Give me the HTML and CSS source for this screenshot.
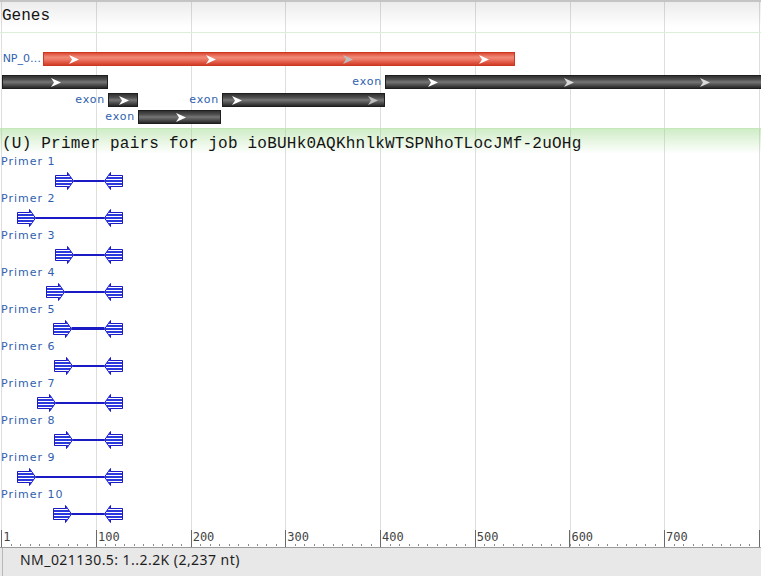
FILE: index.html
```html
<!DOCTYPE html>
<html>
<head>
<meta charset="utf-8">
<title>Sequence viewer</title>
<link rel="stylesheet" href="styles.css">
</head>
<body>
<svg class="defs" width="0" height="0" aria-hidden="true">
  <defs>
    <pattern id="stripes" patternUnits="userSpaceOnUse" width="4" height="3">
      <rect width="4" height="3" fill="#2b39dc"/>
      <rect y="1" width="4" height="1" fill="#ffffff"/>
    </pattern>
    <symbol id="chev" viewBox="0 0 10 9"><polygon points="0,0 10,4.5 0,9 3,4.5"/></symbol>
    <g id="pf"><polygon points="0.5,3.5 12.5,3.5 12.5,0.5 18.5,9 12.5,17.5 12.5,14.5 0.5,14.5" fill="url(#stripes)" stroke="#1b1bc6" stroke-width="1"/></g>
    <g id="pr"><polygon points="18.5,3.5 6.5,3.5 6.5,0.5 0.5,9 6.5,17.5 6.5,14.5 18.5,14.5" fill="url(#stripes)" stroke="#1b1bc6" stroke-width="1"/></g>
  </defs>
</svg>
<div class="viewer">
  <div class="panel">
    <div class="sec-head genes-head">Genes</div>
    <div class="genes">
      <div class="feat mrna" style="left:43px;top:19px;width:472px">
        <span class="flabel name">NP_0…</span>
        <svg class="chev" style="left:25px"><use href="#chev"/></svg>
        <svg class="chev" style="left:162px"><use href="#chev"/></svg>
        <svg class="chev dim" style="left:299px"><use href="#chev"/></svg>
        <svg class="chev" style="left:435px"><use href="#chev"/></svg>
      </div>
      <div class="feat" style="left:2px;top:42px;width:106px">
        <svg class="chev" style="left:48px"><use href="#chev"/></svg>
      </div>
      <div class="feat" style="left:385px;top:42px;width:400px">
        <span class="flabel">exon</span>
        <svg class="chev" style="left:42px"><use href="#chev"/></svg>
        <svg class="chev light" style="left:178px"><use href="#chev"/></svg>
        <svg class="chev light" style="left:314px"><use href="#chev"/></svg>
      </div>
      <div class="feat" style="left:108px;top:60px;width:30px">
        <span class="flabel">exon</span>
        <svg class="chev" style="left:10px"><use href="#chev"/></svg>
      </div>
      <div class="feat" style="left:222px;top:60px;width:163px">
        <span class="flabel">exon</span>
        <svg class="chev" style="left:9px"><use href="#chev"/></svg>
        <svg class="chev dim" style="left:145px"><use href="#chev"/></svg>
      </div>
      <div class="feat" style="left:138px;top:77px;width:83px">
        <span class="flabel">exon</span>
        <svg class="chev" style="left:37px"><use href="#chev"/></svg>
      </div>
    </div>
    <div class="sec-head primer-head">(U) Primer pairs for job ioBUHk0AQKhnlkWTSPNhoTLocJMf-2uOHg</div>
    <div class="primers">
      <div class="primer">
        <div class="plabel">Primer 1</div>
        <div class="pglyph"><svg style="margin-left:55px" width="68" height="18"><use href="#pf"/><line class="pline" x1="18.5" x2="49.5" y1="9" y2="9"/><use href="#pr" x="49"/></svg></div>
      </div>
      <div class="primer">
        <div class="plabel">Primer 2</div>
        <div class="pglyph"><svg style="margin-left:17px" width="106" height="18"><use href="#pf"/><line class="pline" x1="18.5" x2="87.5" y1="9" y2="9"/><use href="#pr" x="87"/></svg></div>
      </div>
      <div class="primer">
        <div class="plabel">Primer 3</div>
        <div class="pglyph"><svg style="margin-left:55px" width="68" height="18"><use href="#pf"/><line class="pline" x1="18.5" x2="49.5" y1="9" y2="9"/><use href="#pr" x="49"/></svg></div>
      </div>
      <div class="primer">
        <div class="plabel">Primer 4</div>
        <div class="pglyph"><svg style="margin-left:46px" width="77" height="18"><use href="#pf"/><line class="pline" x1="18.5" x2="58.5" y1="9" y2="9"/><use href="#pr" x="58"/></svg></div>
      </div>
      <div class="primer">
        <div class="plabel">Primer 5</div>
        <div class="pglyph"><svg style="margin-left:53px" width="70" height="18"><use href="#pf"/><line class="pline thick" x1="18.5" x2="51.5" y1="8.5" y2="8.5"/><use href="#pr" x="51"/></svg></div>
      </div>
      <div class="primer">
        <div class="plabel">Primer 6</div>
        <div class="pglyph"><svg style="margin-left:54px" width="69" height="18"><use href="#pf"/><line class="pline" x1="18.5" x2="50.5" y1="9" y2="9"/><use href="#pr" x="50"/></svg></div>
      </div>
      <div class="primer">
        <div class="plabel">Primer 7</div>
        <div class="pglyph"><svg style="margin-left:37px" width="86" height="18"><use href="#pf"/><line class="pline" x1="18.5" x2="67.5" y1="9" y2="9"/><use href="#pr" x="67"/></svg></div>
      </div>
      <div class="primer">
        <div class="plabel">Primer 8</div>
        <div class="pglyph"><svg style="margin-left:54px" width="69" height="18"><use href="#pf"/><line class="pline" x1="18.5" x2="50.5" y1="9" y2="9"/><use href="#pr" x="50"/></svg></div>
      </div>
      <div class="primer">
        <div class="plabel">Primer 9</div>
        <div class="pglyph"><svg style="margin-left:17px" width="106" height="18"><use href="#pf"/><line class="pline" x1="18.5" x2="87.5" y1="9" y2="9"/><use href="#pr" x="87"/></svg></div>
      </div>
      <div class="primer">
        <div class="plabel">Primer 10</div>
        <div class="pglyph"><svg style="margin-left:53px" width="70" height="18"><use href="#pf"/><line class="pline" x1="18.5" x2="51.5" y1="9" y2="9"/><use href="#pr" x="51"/></svg></div>
      </div>
    </div>
    <div class="ruler">
      <div class="tick">1</div>
      <div class="tick">100</div>
      <div class="tick">200</div>
      <div class="tick">300</div>
      <div class="tick">400</div>
      <div class="tick">500</div>
      <div class="tick">600</div>
      <div class="tick">700</div>
      <div class="tick last">8</div>
    </div>
  </div>
  <div class="status">NM_021130.5: 1..2.2K (2,237 nt)</div>
</div>
</body>
</html>
```

FILE: styles.css
```css
html, body {
  margin: 0;
  padding: 0;
}
body {
  width: 761px;
  height: 576px;
  overflow: hidden;
  background: #e8e8e8;
}
.defs {
  display: block;
  width: 0;
  height: 0;
}
.viewer {
  display: flex;
  flex-direction: column;
  width: 761px;
  height: 576px;
}
.panel {
  flex: 0 0 548px;
  box-sizing: border-box;
  border-top: 2px solid #c4c4c4;
  overflow: hidden;
  background-color: #ffffff;
  background-image: repeating-linear-gradient(to right, #dedede -93.4px, #dedede -92.4px, transparent -92.4px, transparent 1.3px);
}
.sec-head {
  font-family: "Liberation Mono", "Courier New", monospace;
  font-size: 16px;
  line-height: 20px;
  color: #141414;
  padding-left: 2px;
  white-space: nowrap;
}
.genes-head {
  height: 31px;
  box-sizing: border-box;
  padding-top: 4px;
  border-bottom: 1px solid #dcefd8;
  background-image: linear-gradient(rgba(0, 0, 0, 0.075), rgba(0, 0, 0, 0) 85%);
}
.genes {
  position: relative;
  height: 95px;
}
.feat {
  position: absolute;
  height: 14px;
  box-sizing: border-box;
  border: 1px solid #1e1e1e;
  background-image: linear-gradient(#303030, #505050 30%, #767676 50%, #4e4e4e 75%, #262626);
}
.feat.mrna {
  border-color: #cc3820;
  background-image: linear-gradient(#dc4a34, #f08a78 35%, #ec7764 55%, #de5440 80%, #d03e28);
}
.flabel {
  position: absolute;
  right: calc(100% + 4px);
  top: -1px;
  font-family: "DejaVu Sans", Verdana, sans-serif;
  font-size: 11px;
  line-height: 14px;
  letter-spacing: 0.8px;
  color: #2f5fae;
  white-space: nowrap;
}
.flabel.name {
  right: calc(100% + 3px);
  letter-spacing: 0;
}
.chev {
  position: absolute;
  top: 2px;
  width: 10px;
  height: 9px;
  fill: #ffffff;
}
.chev.dim {
  fill: #bdbdbd;
}
.chev.light {
  fill: #dadada;
}
.primer-head {
  height: 26px;
  box-sizing: border-box;
  padding-top: 5px;
  letter-spacing: 0.22px;
  border-top: 1px solid #c6e6bc;
  background-image: linear-gradient(rgba(150, 215, 130, 0.45), rgba(150, 215, 130, 0));
}
.primer {
  height: 37px;
}
.plabel {
  font-family: "DejaVu Sans", Verdana, sans-serif;
  font-size: 11px;
  line-height: 15px;
  letter-spacing: 1px;
  color: #2f5fae;
  padding-left: 1px;
  white-space: nowrap;
}
.pglyph {
  height: 22px;
  box-sizing: border-box;
  padding-top: 3px;
}
.pglyph svg {
  display: block;
}
.pline {
  stroke: #1b1bc6;
  stroke-width: 2;
}
.pline.thick {
  stroke-width: 3;
}
.ruler {
  display: flex;
  height: 24px;
  box-sizing: border-box;
  padding-top: 6px;
  padding-left: 1.3px;
  border-bottom: 1px solid #9a9a9a;
  background-image: repeating-linear-gradient(to right, #8c8c8c -8.17px, #8c8c8c -7.17px, transparent -7.17px, transparent 1.3px);
  background-size: 100% 2px;
  background-position: 0 20px;
  background-repeat: repeat-x;
}
.tick {
  flex: 0 0 94.7px;
  box-sizing: border-box;
  height: 17px;
  border-left: 1px solid #6a6a6a;
  padding: 1px 0 0 1px;
  font-family: "DejaVu Sans Mono", monospace;
  font-size: 12px;
  line-height: 12px;
  color: #444444;
  white-space: nowrap;
}
.tick.last {
  flex-basis: 2px;
}
.status {
  flex: 0 0 28px;
  box-sizing: border-box;
  margin-left: 2px;
  border-left: 1px solid #b8b8b8;
  padding-left: 17px;
  font-family: "Noto Sans", "Segoe UI", sans-serif;
  font-size: 14px;
  line-height: 24px;
  letter-spacing: 0.45px;
  color: #1e1e1e;
  white-space: nowrap;
}
```
